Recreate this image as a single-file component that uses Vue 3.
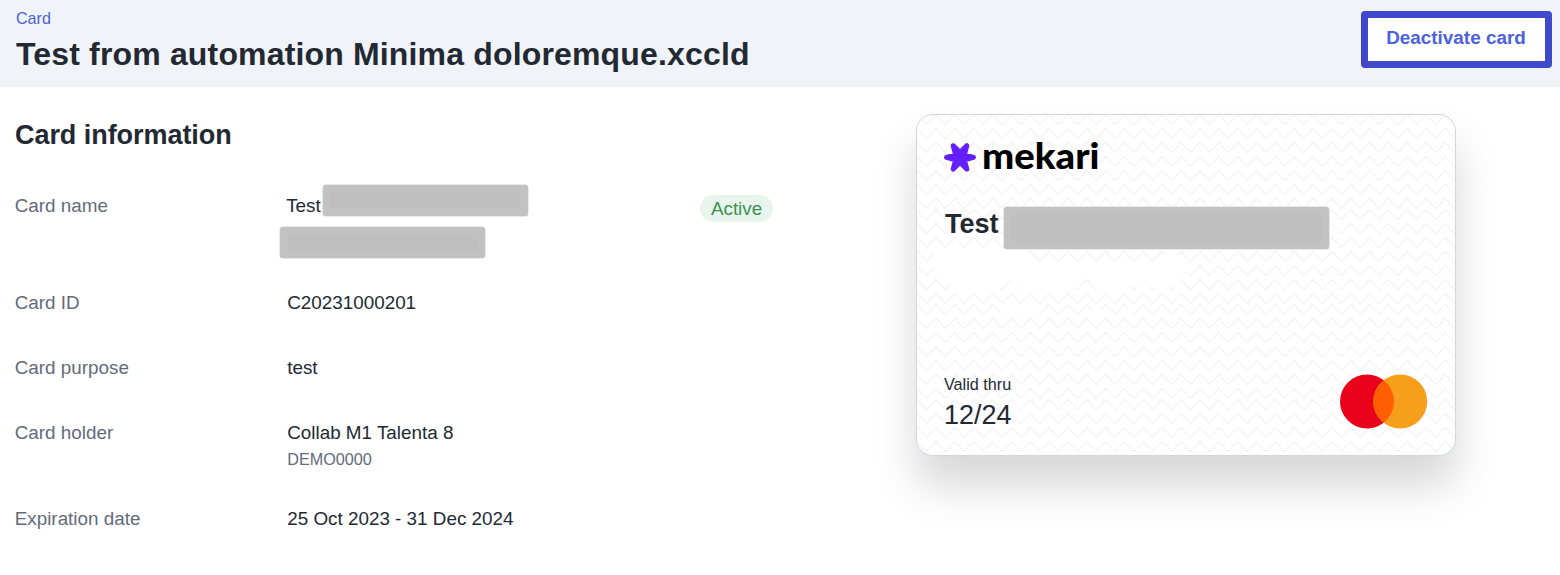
<script setup>
const peaks = [0, 14, 28, 42, 56, 70, 84]
const pitch = 18.85
const zig = (y) => `M${-pitch / 2} ${y + 10}L0 ${y}L${pitch / 2} ${y + 10}L${pitch} ${y}L${pitch * 1.5} ${y + 10}`
</script>

<template>
  <div class="page">
    <header class="top">
      <div>
        <a class="crumb">Card</a>
        <h1>Test from automation Minima doloremque.xccld</h1>
      </div>
      <button class="deactivate">Deactivate card</button>
    </header>
    <main class="content">
      <section class="info">
        <h2>Card information</h2>
        <dl>
          <div class="row name">
            <dt>Card name</dt>
            <dd>
              <div class="line"><span>Test</span><span class="redact"></span></div>
              <span class="redact second"></span>
            </dd>
            <dd class="status"><span class="badge">Active</span></dd>
          </div>
          <div class="row"><dt>Card ID</dt><dd>C20231000201</dd></div>
          <div class="row"><dt>Card purpose</dt><dd>test</dd></div>
          <div class="row holder">
            <dt>Card holder</dt>
            <dd>Collab M1 Talenta 8<small>DEMO0000</small></dd>
          </div>
          <div class="row"><dt>Expiration date</dt><dd>25 Oct 2023 - 31 Dec 2024</dd></div>
        </dl>
      </section>
      <section class="card">
        <svg class="pattern" width="538" height="340" viewBox="0 0 538 340">
          <defs>
            <pattern id="zigzag" x="0.2" y="-1" :width="pitch" height="95" patternUnits="userSpaceOnUse">
              <path v-for="y in peaks" :key="y" :d="zig(y + 0.5)" fill="none" stroke="#f0f0f2" stroke-width="1" />
            </pattern>
          </defs>
          <rect width="538" height="340" fill="url(#zigzag)" />
          <path
            d="M17 134H112V147H244V140H262V147H270V162H263V171H252V176H240L236 171H210V177H181L170 163L155 176H106L92 163L80 177H34V168L30 163H17ZM84 188H122V199H84ZM176 188H184V201H176ZM204 192H216V201H204Z"
            fill="#fff"
          />
        </svg>
        <div class="face">
          <svg class="logo" width="160" height="58" viewBox="0 -14 160 58">
            <path
              transform="translate(16 17.4)"
              fill="#651fff"
              stroke="#651fff"
              stroke-width="4.8"
              stroke-linejoin="round"
              d="M13.500 0L4.500 2.600L6.900 11.800L0 5.200L-6.900 11.800L-4.500 2.600L-13.500 0L-4.500-2.600L-6.900-11.800L0-5.200L6.900-11.800L4.500-2.600Z"
            />
            <text x="38" y="28.500" textLength="117.500" lengthAdjust="spacingAndGlyphs">mekari</text>
          </svg>
          <div class="title"><span>Test</span><span class="redact"></span></div>
          <div class="foot">
            <div>
              <div class="valid">Valid thru</div>
              <div class="date">12/24</div>
            </div>
            <svg class="brand" width="88" height="55" viewBox="0 0 88 55">
              <circle cx="27" cy="27.500" r="27" fill="#eb001b" />
              <circle cx="60.200" cy="27.500" r="27" fill="#f79e1b" />
              <path d="M43.600 6.200A27 27 0 0 1 43.600 48.800A27 27 0 0 1 43.600 6.200Z" fill="#ff5f00" />
            </svg>
          </div>
        </div>
      </section>
    </main>
  </div>
</template>

<style>
body { margin: 0; background: #fff; }
</style>

<style scoped>
.page { width: 1560px; height: 575px; overflow: hidden; background: #fff; font: 18.85px/24px "Liberation Sans", Arial, sans-serif; color: #232933; }
.top { box-sizing: border-box; height: 87px; background: #f0f3f8; display: flex; justify-content: space-between; padding: 8px 8px 0 16px; }
.crumb { display: block; font-size: 16.1px; line-height: 20px; color: #4b61dd; }
h1 { margin: 7px 0 0; font-size: 32px; line-height: 38px; letter-spacing: 0.16px; }
.deactivate { box-sizing: border-box; width: 191px; height: 57px; margin: 2.500px 0.500px 0 0; padding: 0 0 3px; border: 7px solid #4048cc; border-radius: 4px; background: #fff; font: bold 18.9px/25px "Liberation Sans", Arial, sans-serif; color: #4b61dd; }
.content { display: flex; }
.info { width: 901px; padding-left: 15px; }
h2 { margin: 32px 0 0; font-size: 27px; line-height: 32px; letter-spacing: -0.05px; }
dl { margin: 33px 0 0; }
.row { display: flex; height: 65px; padding-top: 9px; box-sizing: border-box; }
.row.name { height: 98px; padding-top: 0; }
.row.name dt { padding-top: 10px; }
.row.holder { height: 86px; }
dt { width: 272.5px; margin-left: -0.3px; color: #626b79; }
dd { margin: 0; }
.name dd { width: 413px; }
.line { display: flex; padding-top: 10px; margin-left: -1px; }
.redact { display: block; box-sizing: border-box; width: 205px; height: 31px; border-radius: 3px; background: #bfbfbf; border: 7px solid #c2c2c2; box-shadow: 0 0 0 0.5px #d4d4d4; }
.line .redact { margin: -9.500px 0 0 2px; }
.second { margin: 9px 0 0 -7.500px; }
.name .status { width: auto; padding-top: 11px; }
.badge { display: block; padding: 2px 10.700px 1px; line-height: 24px; border-radius: 14px; background: #e7f5ec; color: #3f8f52; }
small { display: block; font-size: 16.2px; line-height: 20px; margin-top: 4px; color: #626b79; }
.card { box-sizing: border-box; width: 540px; height: 342px; margin-top: 27px; border: 1px solid #d0d6dd; border-radius: 17px; background: #fff; box-shadow: 0 30px 44px rgba(0, 0, 0, 0.16); display: grid; overflow: hidden; }
.pattern, .face { grid-area: 1 / 1; }
.face { display: flex; flex-direction: column; padding: 25px 27px 0 27px; }
.logo { display: block; margin: -14px 0 -10px; flex: none; }
.logo text { font: 900 36px Lato, sans-serif; fill: #000; }
.title { display: flex; margin: 34px 0 0 1px; font-weight: bold; font-size: 27px; line-height: 32px; }
.title .redact { width: 325px; height: 42px; margin-left: 5px; margin-top: -1px; }
.foot { display: flex; justify-content: space-between; margin-top: 125px; }
.valid { font-size: 16.2px; line-height: 20px; }
.date { font-size: 27px; line-height: 32px; margin-top: 5px; }
</style>
